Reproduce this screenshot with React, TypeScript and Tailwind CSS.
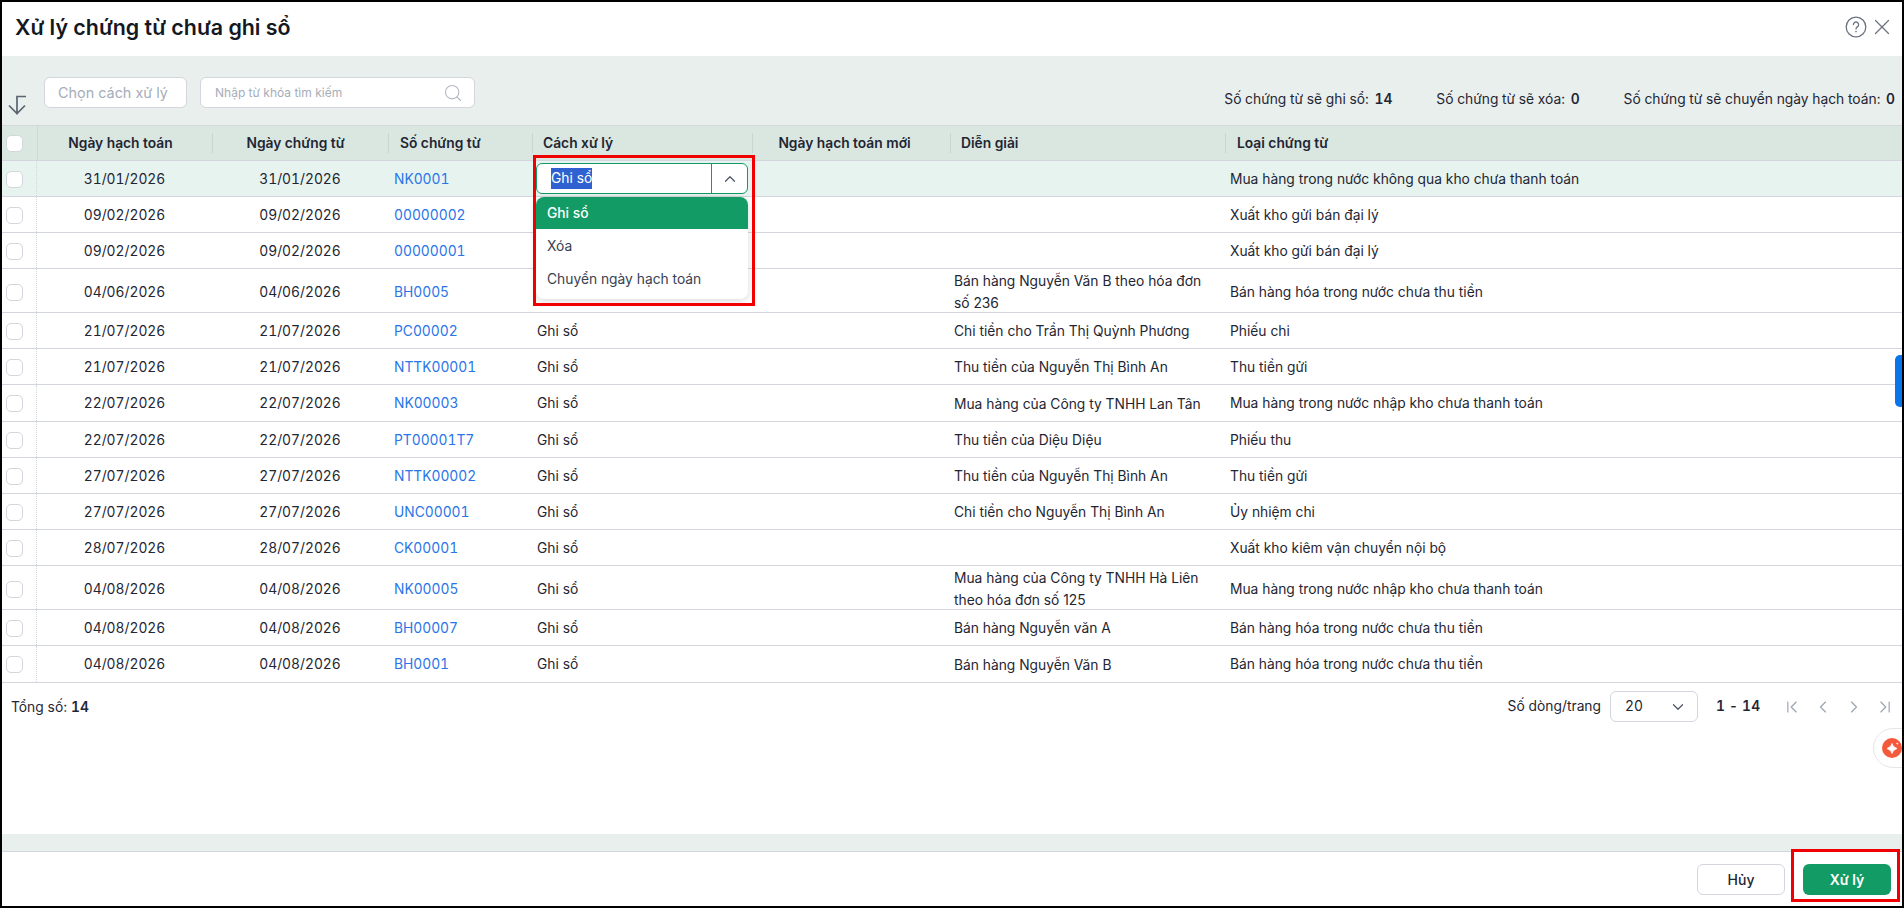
import React from "react";
import { ChevronDown, ChevronLeft, ChevronRight, ChevronUp, ChevronFirst, ChevronLast, X, Search } from "lucide-react";

type Row = {
  ht: string;
  ct: string;
  so: string;
  dg?: string;
  loai: string;
  h: "h-[36px]" | "h-[37px]" | "h-[44px]";
};

const rows: Row[] = [
  { ht: "31/01/2026", ct: "31/01/2026", so: "NK0001", loai: "Mua hàng trong nước không qua kho chưa thanh toán", h: "h-[36px]" },
  { ht: "09/02/2026", ct: "09/02/2026", so: "00000002", loai: "Xuất kho gửi bán đại lý", h: "h-[36px]" },
  { ht: "09/02/2026", ct: "09/02/2026", so: "00000001", loai: "Xuất kho gửi bán đại lý", h: "h-[36px]" },
  { ht: "04/06/2026", ct: "04/06/2026", so: "BH0005", dg: "Bán hàng Nguyễn Văn B theo hóa đơn số 236", loai: "Bán hàng hóa trong nước chưa thu tiền", h: "h-[44px]" },
  { ht: "21/07/2026", ct: "21/07/2026", so: "PC00002", dg: "Chi tiền cho Trần Thị Quỳnh Phương", loai: "Phiếu chi", h: "h-[36px]" },
  { ht: "21/07/2026", ct: "21/07/2026", so: "NTTK00001", dg: "Thu tiền của Nguyễn Thị Bình An", loai: "Thu tiền gửi", h: "h-[36px]" },
  { ht: "22/07/2026", ct: "22/07/2026", so: "NK00003", dg: "Mua hàng của Công ty TNHH Lan Tân", loai: "Mua hàng trong nước nhập kho chưa thanh toán", h: "h-[37px]" },
  { ht: "22/07/2026", ct: "22/07/2026", so: "PT00001T7", dg: "Thu tiền của Diệu Diệu", loai: "Phiếu thu", h: "h-[36px]" },
  { ht: "27/07/2026", ct: "27/07/2026", so: "NTTK00002", dg: "Thu tiền của Nguyễn Thị Bình An", loai: "Thu tiền gửi", h: "h-[36px]" },
  { ht: "27/07/2026", ct: "27/07/2026", so: "UNC00001", dg: "Chi tiền cho Nguyễn Thị Bình An", loai: "Ủy nhiệm chi", h: "h-[36px]" },
  { ht: "28/07/2026", ct: "28/07/2026", so: "CK00001", loai: "Xuất kho kiêm vận chuyển nội bộ", h: "h-[36px]" },
  { ht: "04/08/2026", ct: "04/08/2026", so: "NK00005", dg: "Mua hàng của Công ty TNHH Hà Liên theo hóa đơn số 125", loai: "Mua hàng trong nước nhập kho chưa thanh toán", h: "h-[44px]" },
  { ht: "04/08/2026", ct: "04/08/2026", so: "BH00007", dg: "Bán hàng Nguyễn văn A", loai: "Bán hàng hóa trong nước chưa thu tiền", h: "h-[36px]" },
  { ht: "04/08/2026", ct: "04/08/2026", so: "BH0001", dg: "Bán hàng Nguyễn Văn B", loai: "Bán hàng hóa trong nước chưa thu tiền", h: "h-[37px]" },
];

const gridCols = "grid grid-cols-[35px_175px_176px_144px_220px_198px_275px_1fr]";
const cell = "flex items-center pt-[1px]";

function Checkbox() {
  return <div className="w-[17px] h-[17px] rounded-[5px] bg-white border border-[#d3d6dc]" />;
}

function HeadCell({ children, className = "" }: { children?: React.ReactNode; className?: string }) {
  return (
    <div className="flex items-center h-full">
      <div className={`flex items-center h-[20px] w-full border-l border-[#c9d6d0] font-semibold ${className}`}>
        {children}
      </div>
    </div>
  );
}

export default function App() {
  return (
    <div
      className="relative w-[1904px] h-[908px] flex flex-col bg-white border-2 border-black overflow-hidden text-[13.8px] text-[#1f2633]"
      style={{ fontFamily: "Inter, 'Noto Sans', sans-serif" }}
    >
      {/* header */}
      <div className="h-[54px] shrink-0 flex items-center justify-between pl-[13px] pr-[7px] pb-[4px]">
        <h1 className="text-[21.4px] font-semibold text-[#14181f]">Xử lý chứng từ chưa ghi sổ</h1>
        <div className="flex items-center gap-[2px] text-[#6b7280]">
          <svg width="22" height="22" viewBox="0 0 22 22" fill="none" stroke="currentColor" strokeWidth="1.3">
            <circle cx="11" cy="11" r="9.8" />
            <path d="M8.4 8.6a2.6 2.6 0 1 1 3.9 2.3c-.8.5-1.3 1-1.3 2" strokeLinecap="round" />
            <circle cx="11" cy="15.6" r="0.8" fill="currentColor" stroke="none" />
          </svg>
          <X size={26} strokeWidth={1.1} />
        </div>
      </div>

      {/* toolbar */}
      <div className="h-[70px] shrink-0 bg-[#e9efed] flex items-start justify-between border-b border-[#d3d6dc] pt-[21px] pl-[6px] pr-[7px]">
        <div className="flex items-start">
          <svg className="mt-[17px]" width="22" height="22" viewBox="0 0 22 22" fill="none" stroke="#5b6470" strokeWidth="1.7">
            <path d="M18 2.500H9v18M1 11.500l8 8 8-8" />
          </svg>
          <div className="ml-[14px] w-[143px] h-[31px] bg-white rounded-[6px] border border-[#d3d6dc] flex items-center pl-[13px] text-[#a6adb8] text-[14.4px]">
            Chọn cách xử lý
          </div>
          <div className="ml-[13px] w-[275px] h-[31px] bg-white rounded-[6px] border border-[#d3d6dc] flex items-center justify-between pl-[14px] pr-[11px] text-[#a6adb8] text-[12px]">
            <span>Nhập từ khóa tìm kiếm</span>
            <Search size={20} strokeWidth={1.4} className="text-[#b5bac2]" />
          </div>
        </div>
        <div className="flex items-center gap-[44px] tabular-nums mt-[12px]">
          <span>Số chứng từ sẽ ghi sổ: <b className="font-semibold ml-[2px]">14</b></span>
          <span>Số chứng từ sẽ xóa: <b className="font-semibold ml-[2px]">0</b></span>
          <span>Số chứng từ sẽ chuyển ngày hạch toán: <b className="font-semibold ml-[2px]">0</b></span>
        </div>
      </div>

      {/* table */}
      <div className={`${gridCols} h-[35px] shrink-0 bg-[#dae7e1] border-b border-[#d3d6dc]`}>
        <div className="flex items-center pl-[4px] border-r border-[#cfd8d4] -mr-px">
          <Checkbox />
        </div>
        <HeadCell className="justify-center border-l-0 pr-[8px]">Ngày hạch toán</HeadCell>
        <HeadCell className="justify-center pr-[10px]">Ngày chứng từ</HeadCell>
        <HeadCell className="pl-[11px]">Số chứng từ</HeadCell>
        <HeadCell className="pl-[10px]">Cách xử lý</HeadCell>
        <HeadCell className="justify-center pr-[14px]">Ngày hạch toán mới</HeadCell>
        <HeadCell className="pl-[10px]">Diễn giải</HeadCell>
        <HeadCell className="pl-[11px]">Loại chứng từ</HeadCell>
      </div>

      {rows.map((r, i) => (
        <div
          key={i}
          className={`${gridCols} shrink-0 border-b border-[#d3d6dc] ${r.h} ${i === 0 ? "bg-[#e6f3ef]" : ""}`}
        >
          <div className={`${cell} pl-[4px] border-r border-dotted border-[#d3d6dc]`}>
            <Checkbox />
          </div>
          <div className={`${cell} justify-center tabular-nums`}>{r.ht}</div>
          <div className={`${cell} justify-center tabular-nums`}>{r.ct}</div>
          <div className={`${cell} pl-[6px] text-[#2a75e8] tabular-nums`}>{r.so}</div>
          <div className={`${cell} pl-[5px]`}>{i > 3 ? "Ghi sổ" : ""}</div>
          <div />
          <div className={`${cell} pl-[4px] pr-[6px] leading-[22px]`}>
            <span>{r.dg}</span>
          </div>
          <div className={`${cell} pl-[5px]`}>{r.loai}</div>
        </div>
      ))}

      {/* pagination */}
      <div className="h-[47px] shrink-0 flex items-center justify-between pl-[9px] pr-[7px]">
        <span className="pt-[2px]">Tổng số: <b className="font-semibold tabular-nums">14</b></span>
        <div className="flex items-center">
          <span>Số dòng/trang</span>
          <div className="ml-[9px] w-[88px] h-[31px] rounded-[6px] border border-[#d3d6dc] flex items-center justify-between pl-[14px] pr-[10px] tabular-nums">
            <span>20</span>
            <ChevronDown size={18} strokeWidth={1.6} className="text-[#4b5563]" />
          </div>
          <b className="ml-[18px] font-semibold w-[66px] tabular-nums tracking-[0.2px]">1 - 14</b>
          <div className="flex items-center gap-[11px] text-[#9ca3af]">
            <ChevronFirst size={20} strokeWidth={1.4} />
            <ChevronLeft size={20} strokeWidth={1.4} />
            <ChevronRight size={20} strokeWidth={1.4} />
            <ChevronLast size={20} strokeWidth={1.4} />
          </div>
        </div>
      </div>

      <div className="flex-1" />
      <div className="h-[18px] shrink-0 bg-[#e9efed] border-b border-[#d3d6dc]" />

      {/* footer */}
      <div className="h-[54px] shrink-0 flex items-center justify-end gap-[18px] pr-[11px] text-[14px]">
        <button className="w-[88px] h-[31px] rounded-[6px] border border-[#d3d6dc] bg-white font-medium">Hủy</button>
        <button className="w-[88px] h-[31px] rounded-[6px] bg-[#129b65] text-white font-semibold">Xử lý</button>
      </div>

      {/* dropdown mở trên dòng đầu */}
      <div className="absolute left-[534px] top-[161px] w-[212px] h-[31px] flex bg-white rounded-[6px] border border-[#129b65]">
        <div className="flex-1 flex items-center pl-[14px]">
          <span className="bg-[#2f62d0] text-white">Ghi sổ</span>
        </div>
        <div className="w-[36px] flex items-center justify-center border-l border-[#129b65]">
          <ChevronUp size={18} strokeWidth={1.6} className="text-[#4b5563]" />
        </div>
      </div>
      <div className="absolute left-[534px] top-[195px] w-[212px] h-[102px] bg-white rounded-[8px] overflow-hidden shadow-[0_2px_8px_rgba(0,0,0,0.15)]">
        <div className="h-[32px] flex items-center pl-[11px] pt-[1px] bg-[#129b65] text-white font-medium">Ghi sổ</div>
        <div className="h-[34px] flex items-center pl-[11px] text-[#374151]">Xóa</div>
        <div className="h-[33px] flex items-center pl-[11px] text-[#374151]">Chuyển ngày hạch toán</div>
      </div>

      {/* khung đỏ chú thích */}
      <div className="absolute left-[531px] top-[153px] w-[222px] h-[151px] border-[3px] border-[#f00000]" />
      <div className="absolute left-[1789px] top-[847px] w-[109px] h-[53px] border-[3px] border-[#f00000]" />

      {/* nút nổi bên phải */}
      <div className="absolute right-0 top-[353px] w-[7px] h-[52px] bg-[#0a74ea] rounded-l-[5px]" />
      <div className="absolute right-[-2px] top-[726px] w-[31px] h-[40px] bg-white rounded-l-[20px] border border-[#e5e7eb] flex items-center pl-[8px]">
        <div className="w-[20px] h-[20px] shrink-0 rounded-full bg-[#f4593c] flex items-center justify-center">
          <svg width="14" height="14" viewBox="0 0 14 14" fill="white">
            <path d="M7 2.500c.9 2.600 1.900 3.600 5 5-3.100 1.400-4.100 2.400-5 5-.9-2.600-1.900-3.600-5-5 3.100-1.400 4.100-2.400 5-5z" stroke="white" strokeWidth="0.8" strokeLinejoin="round" />
            <path d="M12.200 1.200l.4 1 1 .4-1 .4-.4 1-.4-1-1-.4 1-.4z" />
          </svg>
        </div>
      </div>
    </div>
  );
}
